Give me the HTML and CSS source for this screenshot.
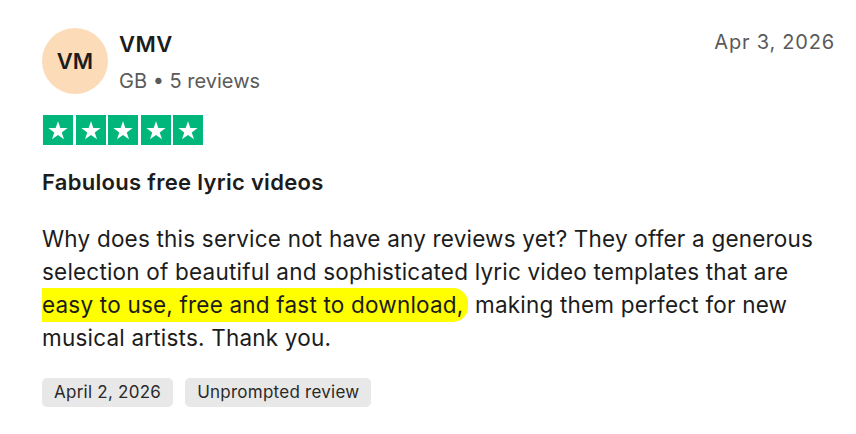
FILE: index.html
```html
<!DOCTYPE html>
<html lang="en">
<head>
<meta charset="utf-8">
<title>Review</title>
<link rel="stylesheet" href="styles.css">
</head>
<body>
<article class="review">
  <header class="head">
    <div class="avatar">VM</div>
    <div class="who">
      <div class="name">VMV</div>
      <div class="meta">GB • 5 reviews</div>
    </div>
    <time class="date">Apr 3, 2026</time>
  </header>
  <div class="stars">
    <span class="star"><svg viewBox="0 0 24 24"><path d="M12 3.2l2.35 6.9h7.3l-5.9 4.3 2.25 6.9L12 17l-6 4.3 2.25-6.9-5.9-4.3h7.3z"/></svg></span>
    <span class="star"><svg viewBox="0 0 24 24"><path d="M12 3.2l2.35 6.9h7.3l-5.9 4.3 2.25 6.9L12 17l-6 4.3 2.25-6.9-5.9-4.3h7.3z"/></svg></span>
    <span class="star"><svg viewBox="0 0 24 24"><path d="M12 3.2l2.35 6.9h7.3l-5.9 4.3 2.25 6.9L12 17l-6 4.3 2.25-6.9-5.9-4.3h7.3z"/></svg></span>
    <span class="star"><svg viewBox="0 0 24 24"><path d="M12 3.2l2.35 6.9h7.3l-5.9 4.3 2.25 6.9L12 17l-6 4.3 2.25-6.9-5.9-4.3h7.3z"/></svg></span>
    <span class="star"><svg viewBox="0 0 24 24"><path d="M12 3.2l2.35 6.9h7.3l-5.9 4.3 2.25 6.9L12 17l-6 4.3 2.25-6.9-5.9-4.3h7.3z"/></svg></span>
  </div>
  <h2 class="title">Fabulous free lyric videos</h2>
  <p class="body">Why does this service not have any reviews yet? They offer a generous selection of beautiful and sophisticated lyric video templates that are <mark class="hl">easy to use, free and fast to download,</mark> making them perfect for new musical artists. Thank you.</p>
  <div class="tags">
    <span class="tag">April 2, 2026</span>
    <span class="tag">Unprompted review</span>
  </div>
</article>
</body>
</html>
```
FILE: styles.css
```css
html, body {
  margin: 0;
  background: #ffffff;
}
body {
  font-family: Inter, "Noto Sans", "Liberation Sans", sans-serif;
  color: #1c1c1c;
}
.review {
  width: 793px;
  padding: 28px 21px 0 42px;
}
.head {
  display: flex;
  align-items: flex-start;
}
.avatar {
  width: 66px;
  height: 66px;
  border-radius: 50%;
  background: #fcdcb8;
  display: flex;
  align-items: center;
  justify-content: center;
  font-size: 22px;
  font-weight: 600;
  color: #1c1c1c;
  flex: none;
}
.who {
  margin-left: 11px;
  flex: 1;
}
.name {
  font-size: 22px;
  font-weight: 600;
  letter-spacing: 0.5px;
  line-height: 30px;
  margin-top: 1px;
}
.meta {
  font-size: 20px;
  letter-spacing: 0px;
  color: #5a5a5a;
  line-height: 28px;
  margin-top: 8px;
}
.date {
  font-size: 20px;
  letter-spacing: 0.8px;
  color: #5a5a5a;
  line-height: 30px;
  margin-top: -1px;
}
.stars {
  display: flex;
  gap: 2.5px;
  margin-top: 20px;
  margin-left: 1px;
}
.star {
  width: 30px;
  height: 30px;
  background: #00b67a;
  display: flex;
  align-items: center;
  justify-content: center;
}
.star svg {
  width: 24px;
  height: 24px;
  fill: #ffffff;
}
.title {
  font-size: 22px;
  font-weight: 600;
  letter-spacing: 0.3px;
  line-height: 28px;
  margin: 23px 0 0;
}
.body {
  font-size: 22.5px;
  letter-spacing: 0.2px;
  line-height: 33px;
  margin: 26px 0 0;
}
.hl {
  background: #ffff00;
  color: inherit;
  padding: 3px 5px 4px 0;
  border-radius: 0 15px 15px 0;
}
.tags {
  display: flex;
  gap: 12px;
  margin-top: 24px;
}
.tag {
  background: #e8e8e8;
  border-radius: 5px;
  font-size: 17px;
  letter-spacing: 0.25px;
  line-height: 29px;
  padding: 0 12px;
  color: #2a2a2a;
}
```
